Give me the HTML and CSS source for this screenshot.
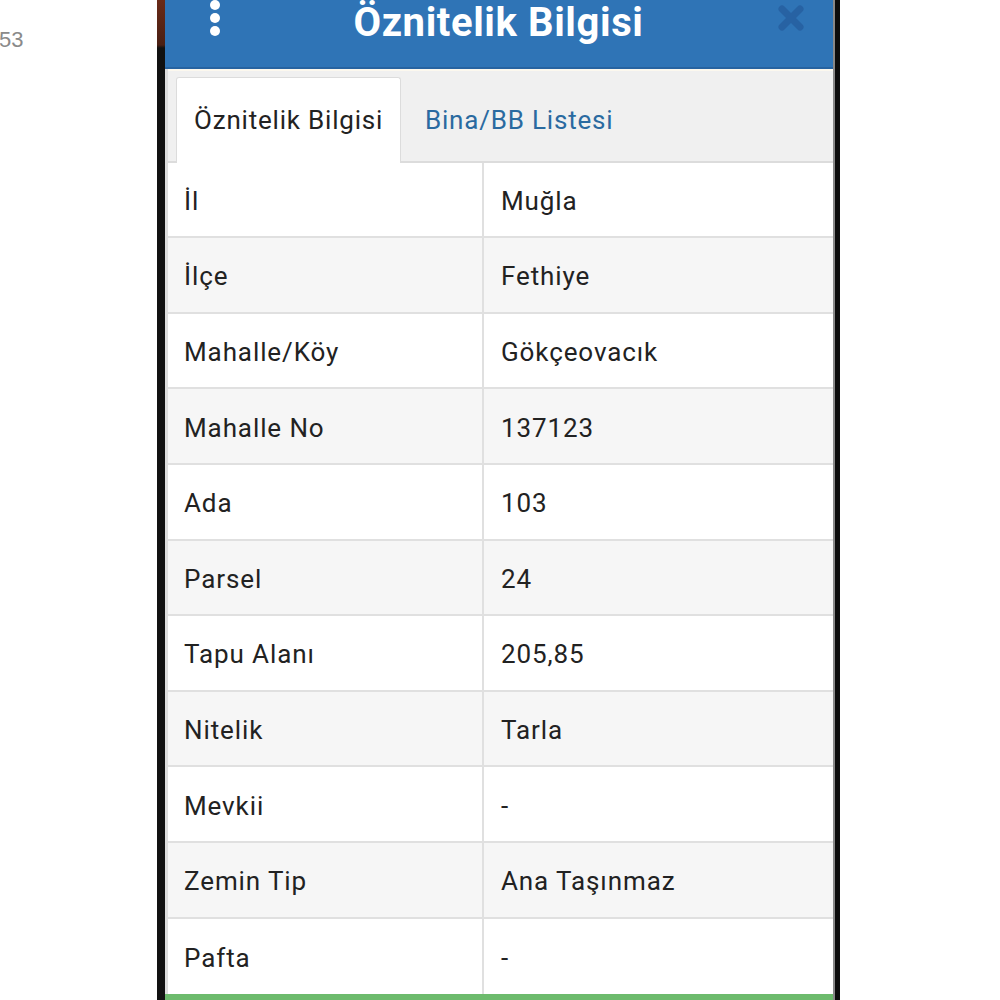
FILE: index.html
```html
<!DOCTYPE html>
<html lang="tr">
<head>
    <meta charset="utf-8" />
    <title>Öznitelik Bilgisi</title>
    <link rel="stylesheet" href="styles.css">
</head>
<body>
    <div class="sayfa">
        <div class="kenar">
            <span class="sayi">53</span>
        </div>
        <div class="cerceve-sol"></div>
        <div class="ekran">
            <div class="baslik">
                <span class="menu">
                    <i></i><i></i><i></i>
                </span>
                <h1>Öznitelik Bilgisi</h1>
                <span class="kapat">
                    <svg width="28" height="28" viewBox="0 0 28 28">
                        <path d="M5 5 L23 23 M23 5 L5 23" stroke="#2762a3" stroke-width="7" stroke-linecap="round" />
                    </svg>
                </span>
            </div>
            <div class="sekmeler">
                <div class="sekme aktif">Öznitelik Bilgisi</div>
                <div class="sekme">Bina/BB Listesi</div>
            </div>
            <div class="tablo">
                <div class="satir"><div>İl</div><div>Muğla</div></div>
                <div class="satir"><div>İlçe</div><div>Fethiye</div></div>
                <div class="satir"><div>Mahalle/Köy</div><div>Gökçeovacık</div></div>
                <div class="satir"><div>Mahalle No</div><div>137123</div></div>
                <div class="satir"><div>Ada</div><div>103</div></div>
                <div class="satir"><div>Parsel</div><div>24</div></div>
                <div class="satir"><div>Tapu Alanı</div><div>205,85</div></div>
                <div class="satir"><div>Nitelik</div><div>Tarla</div></div>
                <div class="satir"><div>Mevkii</div><div>-</div></div>
                <div class="satir"><div>Zemin Tip</div><div>Ana Taşınmaz</div></div>
                <div class="satir"><div>Pafta</div><div>-</div></div>
            </div>
            <div class="alt-cizgi"></div>
        </div>
        <div class="cerceve-sag"></div>
    </div>
</body>
</html>
```

FILE: styles.css
```css
* {
    margin: 0;
    padding: 0;
    box-sizing: border-box;
}

body {
    background: white;
    font-family: Roboto, "Noto Sans", sans-serif;
    color: #222;
    overflow: hidden;
}

.sayfa {
    display: flex;
    height: 1000px;
}

.kenar {
    width: 157px;
    padding-top: 27px;
}

.sayi {
    display: block;
    margin-left: -1px;
    font-family: "Liberation Sans", sans-serif;
    font-size: 22px;
    color: #8a8a8a;
}

.cerceve-sol {
    width: 8px;
    background: linear-gradient(#6a2a18 0, #4a2014 45px, #111 48px);
}

.cerceve-sag {
    width: 7px;
    background: #0c0c0c;
    border-left: 2px solid #888;
}

.ekran {
    width: 668px;
    display: flex;
    flex-direction: column;
    border-left: 3px solid #ddd;
    background: #f0f0f0;
}

.baslik {
    height: 70px;
    margin-left: -3px;
    background: #2f74b6;
    border-bottom: 2px solid #2763a0;
    display: flex;
    align-items: flex-start;
    color: white;
}

.menu {
    display: flex;
    flex-direction: column;
    gap: 3px;
    margin: 0 0 0 45px;
}

    .menu i {
        display: block;
        width: 10px;
        height: 10px;
        border-radius: 50%;
        background: white;
    }

.baslik h1 {
    flex: 1;
    text-align: center;
    font-size: 40px;
    font-weight: bold;
    letter-spacing: 0.6px;
    line-height: 46px;
    margin: 0 0 0 0;
}

.kapat {
    margin: 4px 28px 0 0;
}

.sekmeler {
    height: 95px;
    display: flex;
    align-items: flex-end;
    padding-left: 8px;
    border-top: 2px solid #fcf8ee;
    border-bottom: 2px solid #dcdcdc;
}

.sekme {
    height: 86px;
    display: flex;
    align-items: center;
    padding: 0 24px;
    font-size: 26px;
    letter-spacing: 0.8px;
    color: #2a6aa0;
    margin-bottom: -2px;
}

    .sekme.aktif {
        background: white;
        color: #222;
        border: 1px solid #dcdcdc;
        border-bottom: none;
        border-radius: 3px 3px 0 0;
        width: 225px;
        padding: 0 0 0 17px;
        white-space: nowrap;
    }

.tablo {
    background: white;
}

.satir {
    display: grid;
    grid-template-columns: 316px 1fr;
    height: 75.6px;
    border-bottom: 2px solid #e0e0e0;
    font-size: 26px;
    letter-spacing: 0.9px;
}

    .satir:nth-child(even) {
        background: #f6f6f6;
    }

    .satir:last-child {
        border-bottom: none;
    }

    .satir div {
        display: flex;
        align-items: center;
        padding: 3px 0 0 16px;
    }

        .satir div:first-child {
            border-right: 2px solid #e0e0e0;
        }

        .satir div:last-child {
            padding-left: 17px;
        }

.alt-cizgi {
    height: 6px;
    background: #6dbb6d;
    margin-left: -3px;
}
```
